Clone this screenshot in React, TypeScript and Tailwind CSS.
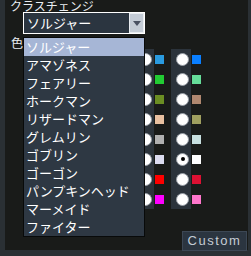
import React from "react";

const jp = { fontFamily: '"Noto Sans CJK JP", "Noto Sans", sans-serif' };

const classes = [
  "ソルジャー",
  "アマゾネス",
  "フェアリー",
  "ホークマン",
  "リザードマン",
  "グレムリン",
  "ゴブリン",
  "ゴーゴン",
  "パンプキンヘッド",
  "マーメイド",
  "ファイター",
];

// left column / right column swatches
const colorsA = ["#2a9be0", "#22cc33", "#6b8e23", "#e8c0a0", "#b0b0b0", "#dcdcf0", "#ff0000", "#ff00ff"];
const colorsB = ["#0a7fff", "#66dd99", "#b08870", "#a0a060", "#c8e0e0", "#ffffff", "#dd1133", "#ff77cc"];

function Radio({ checked }: { checked?: boolean }) {
  return (
    <div className="w-[13px] h-[13px] rounded-full bg-white border border-[#9aa0a8] flex items-center justify-center">
      {checked && <div className="w-[4px] h-[4px] rounded-full bg-black" />}
    </div>
  );
}

function ColorColumn({ colors, checkedIdx }: { colors: string[]; checkedIdx?: number }) {
  return (
    <div className="flex">
      <div className="w-[20px] bg-[#2b333b] flex flex-col">
        {colors.map((c, i) => (
          <div key={c} className="h-[20px] flex items-center justify-end pr-[2px]">
            <Radio checked={checkedIdx === i} />
          </div>
        ))}
      </div>
      <div className="flex flex-col ml-[1px]">
        {colors.map(c => (
          <div key={c} className="h-[20px] flex items-center">
            <div className="w-[9px] h-[9px]" style={{ backgroundColor: c }} />
          </div>
        ))}
      </div>
    </div>
  );
}

export default function App() {
  return (
    <div className="w-[251px] h-[256px] bg-[#2a3034] overflow-hidden">
      <div className="ml-[5px] w-[243px] h-[250px] bg-[#191b19] relative flex flex-col">
        {/* Title */}
        <div className="pl-[5px] h-[15px] -mt-[2px] mb-[-1px] text-[12px] leading-[16px] text-[#e8ecf0]" style={jp}>
          クラスチェンジ
        </div>

        {/* Select */}
        <div className="ml-[18px] w-[122px] h-[22px] border border-white bg-[#2b3540] flex items-center">
          <span className="pl-[3px] flex-1 text-[13px] leading-[16px] text-white" style={jp}>ソルジャー</span>
          <div className="w-[15px] h-[20px] bg-[#c4ccd6] border border-[#e8ecf0] flex items-center justify-center">
            <div className="w-0 h-0 border-l-[4px] border-r-[4px] border-t-[5px] border-l-transparent border-r-transparent border-t-[#4a5262]" />
          </div>
        </div>

        {/* Color row */}
        <div className="flex">
          <div className="pl-[6px] pt-[2px] text-[12px] leading-[14px] text-[#e8ecf0]" style={jp}>色</div>
          <div className="ml-[111px] mt-[15px] flex gap-[7px]">
            <ColorColumn colors={colorsA} />
            <ColorColumn colors={colorsB} checkedIdx={5} />
          </div>
        </div>

        {/* Custom button */}
        <div className="mt-auto mb-[-1px] flex justify-end pr-[1px]">
          <button className="w-[65px] h-[20px] bg-[#2b3540] border border-[#3c4754] text-[#c4ccd4] text-[13px] leading-[16px] tracking-[1.5px]" style={{ fontFamily: '"Liberation Sans", sans-serif' }}>
            Custom
          </button>
        </div>

        {/* Dropdown list (open, over content) */}
        <div className="absolute left-[18px] top-[37px] w-[122px] h-[200px] border border-[#080a0a] bg-[#2e3843] flex flex-col">
          {classes.map((c, i) => (
            <div
              key={c}
              className={`h-[18px] pl-[2px] text-[13px] leading-[18px] text-white whitespace-nowrap ${i === 0 ? "bg-[#a6b6d6]" : ""}`}
              style={jp}
            >
              {c}
            </div>
          ))}
        </div>
      </div>
    </div>
  );
}
